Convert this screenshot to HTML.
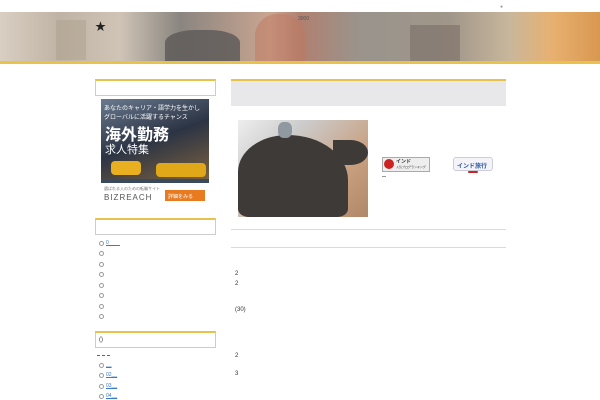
<!DOCTYPE html>
<html><head><meta charset="utf-8"><style>
*{margin:0;padding:0;box-sizing:border-box}
body{width:600px;height:400px;background:#fff;position:relative;overflow:hidden;font-family:"Liberation Sans","Noto Sans CJK JP",sans-serif;font-size:6px;color:#333}
.a{position:absolute}
.hdr{left:0;top:12px;width:600px;height:50px;background:linear-gradient(90deg,#d9cfc2 0%,#bfb3a5 10%,#cfc4b6 20%,#8a8580 30%,#c9a590 45%,#b08070 50%,#9a948c 60%,#a0968a 75%,#c9b79c 85%,#e8b070 92%,#d89850 100%)}
.gold{left:0;top:61px;width:600px;height:3px;background:#e8c24a}
.box{border:1px solid #ccc;border-top:2px solid #e8c24a;background:#fff}
.bul{width:5px;height:5px;border:1px solid #999;border-radius:50%;left:99px}
.lk{color:#3a7bc8;text-decoration:underline;font-size:5px}
</style></head><body>
<div class="a hdr"></div>
<div class="a" style="left:56px;top:20px;width:30px;height:40px;background:#a89a88;opacity:.4"></div>
<div class="a" style="left:165px;top:30px;width:75px;height:32px;background:#5f5c5a;opacity:.85;border-radius:40% 40% 0 0"></div>
<div class="a" style="left:255px;top:14px;width:50px;height:48px;background:#c07860;opacity:.5;border-radius:45% 45% 0 0"></div>
<div class="a" style="left:410px;top:25px;width:50px;height:37px;background:#6e625a;opacity:.45"></div>
<div class="a" style="left:95px;top:18px;font-size:11px;color:#222">★</div>
<div class="a" style="left:298px;top:16px;color:#555;font-size:5px">3000</div>
<div class="a" style="left:500px;top:4px;color:#999;font-size:5px">●</div>
<div class="a gold"></div>

<div class="a box" style="left:95px;top:79px;width:121px;height:17px"></div>
<div class="a" style="left:101px;top:99px;width:108px;height:108px;background:#3a4a5a;overflow:hidden">
 <div class="a" style="left:0;top:0;width:108px;height:80px;background:linear-gradient(160deg,#6a7a90,#2c3444 50%,#7a6040)"></div>
 <div class="a" style="left:10px;top:62px;width:30px;height:14px;background:#e8b020;border-radius:4px"></div>
 <div class="a" style="left:55px;top:64px;width:50px;height:14px;background:#e0a818;border-radius:4px"></div>
 <div class="a" style="left:3px;top:4px;color:#fff;font-size:6px">あなたのキャリア・語学力を生かし</div>
 <div class="a" style="left:3px;top:13px;color:#fff;font-size:6px">グローバルに活躍するチャンス</div>
 <div class="a" style="left:4px;top:22px;color:#fff;font-size:16px;font-weight:bold">海外勤務</div>
 <div class="a" style="left:4px;top:42px;color:#fff;font-size:11px">求人特集</div>
 <div class="a" style="left:0;top:84px;width:108px;height:24px;background:#fff"></div>
 <div class="a" style="left:3px;top:87px;color:#777;font-size:4px">選ばれる人のための転職サイト</div>
 <div class="a" style="left:3px;top:94px;color:#555;font-size:8px;letter-spacing:1px">BIZREACH</div>
 <div class="a" style="left:64px;top:91px;width:40px;height:11px;background:#e87a20;color:#fff;font-size:5px;padding:3px">詳細をみる</div>
</div>

<div class="a box" style="left:95px;top:218px;width:121px;height:17px"></div>
<div class="a bul" style="top:241px"></div><div class="a lk" style="left:106px;top:240px">0&nbsp;&nbsp;&nbsp;&nbsp;&nbsp;&nbsp;&nbsp;&nbsp;</div>
<div class="a bul" style="top:251px"></div>
<div class="a bul" style="top:262px"></div>
<div class="a bul" style="top:272px"></div>
<div class="a bul" style="top:283px"></div>
<div class="a bul" style="top:293px"></div>
<div class="a bul" style="top:304px"></div>
<div class="a bul" style="top:314px"></div>

<div class="a box" style="left:95px;top:331px;width:121px;height:17px;padding:4px 3px;font-size:6px">()</div>
<div class="a" style="left:97px;top:355px;width:13px;border-top:1px dashed #d33"></div>
<div class="a bul" style="top:363px"></div><div class="a lk" style="left:106px;top:362px">__</div>
<div class="a bul" style="top:373px"></div><div class="a lk" style="left:106px;top:372px">02__</div>
<div class="a bul" style="top:384px"></div><div class="a lk" style="left:106px;top:383px">03__</div>
<div class="a bul" style="top:394px"></div><div class="a lk" style="left:106px;top:393px">04__</div>

<div class="a" style="left:231px;top:79px;width:275px;height:27px;background:#e8e8ea;border-top:2px solid #e8c24a"></div>
<div class="a" style="left:238px;top:120px;width:130px;height:97px;background:linear-gradient(135deg,#eee 0%,#ccc 30%,#c8a080 70%,#b08868 100%);overflow:hidden">
 <div class="a" style="left:0;top:15px;width:110px;height:82px;background:#3e3a38;border-radius:45% 55% 10% 10%"></div>
 <div class="a" style="left:95px;top:20px;width:35px;height:25px;background:#3e3a38;border-radius:0 50% 50% 0"></div>
 <div class="a" style="left:40px;top:2px;width:14px;height:16px;background:#9098a0;border-radius:40%"></div>
</div>
<div class="a" style="left:382px;top:157px;width:48px;height:15px;background:#eee;border:1px solid #aaa"></div>
<div class="a" style="left:384px;top:159px;width:10px;height:10px;background:#c22;border-radius:50%"></div>
<div class="a" style="left:396px;top:158px;font-size:5px;font-weight:bold">インド</div>
<div class="a" style="left:396px;top:165px;font-size:3px">人気ブログランキング</div>
<div class="a" style="left:382px;top:176px;width:4px;border-top:1px solid #999"></div>
<div class="a" style="left:453px;top:157px;width:40px;height:14px;background:#f4f4f8;border:1px solid #ccd;border-radius:3px;color:#2a55a0;font-size:6px;font-weight:bold;padding:3px 3px">インド旅行</div>
<div class="a" style="left:468px;top:171px;width:10px;height:2px;background:#c22;border-radius:2px"></div>

<div class="a" style="left:231px;top:229px;width:275px;height:1px;background:#eedd99"></div>
<div class="a" style="left:231px;top:247px;width:275px;height:1px;background:#eedd99"></div>
<div class="a" style="left:235px;top:271px">2</div>
<div class="a" style="left:235px;top:281px">2</div>
<div class="a" style="left:235px;top:307px">(30)</div>
<div class="a" style="left:235px;top:353px">2</div>
<div class="a" style="left:235px;top:371px">3</div>
</body></html>
